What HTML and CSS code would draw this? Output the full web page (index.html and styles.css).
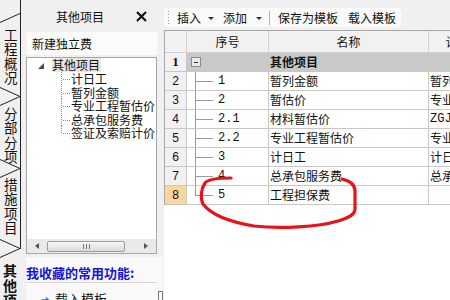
FILE: index.html
```html
<!DOCTYPE html>
<html lang="zh-CN">
<head>
  <meta charset="UTF-8" />
  <title>其他项目</title>
  <link rel="stylesheet" href="styles.css">
</head>
<body>
  <div class="app">
    <div class="tabs">
      <svg class="tab-lines" width="21" height="300" viewBox="0 0 21 300">
        <path d="M0 22.5 L20 13.5 M0 87.5 L20 96.5 L0 105.5 M0 159.5 L20 168.5 L0 177.5 M0 239.5 L20 248.5 L0 257.5" stroke="#222" fill="none" />
      </svg>
      <div class="tab t1"><span>工程概况</span></div>
      <div class="tab t2"><span>分部分项</span></div>
      <div class="tab t3"><span>措施项目</span></div>
      <div class="tab t4 active"><span>其他项目</span></div>
    </div>

    <div class="side">
      <div class="side-head">
        <span>其他项目</span>
        <svg class="close" width="11" height="11" viewBox="0 0 11 11">
          <path d="M1 1 L10 10 M10 1 L1 10" stroke="#111" stroke-width="2.2" />
        </svg>
      </div>
      <div class="new-box">新建独立费</div>

      <div class="tree">
        <div class="tree-root"><i class="tri"></i><span>其他项目</span></div>
        <ul class="tree-kids">
          <li>计日工</li>
          <li>暂列金额</li>
          <li>专业工程暂估价</li>
          <li>总承包服务费</li>
          <li>签证及索赔计价</li>
        </ul>
        <div class="hscroll">
          <i class="arr-l"></i>
          <div class="thumb"><b></b></div>
          <i class="arr-r"></i>
        </div>
      </div>

      <div class="fav">
        <div class="fav-title">我收藏的常用功能:</div>
        <div class="fav-item">
          <span class="go">➔</span><span>载入模板</span>
          <i class="vstub"></i>
        </div>
      </div>
    </div>

    <div class="main">
      <div class="toolbar">
        <i class="grip"></i>
        <span class="tb-item first">插入</span><i class="dd"></i>
        <span class="tb-item add">添加</span><i class="dd dd2"></i>
        <i class="sep"></i>
        <span class="tb-item save">保存为模板</span>
        <span class="tb-item load">载入模板</span>
      </div>

      <div class="grid">
        <div class="row head">
          <div class="c num"></div>
          <div class="c center">序号</div>
          <div class="c center">名称</div>
          <div class="c center">计算基数</div>
        </div>
        <div class="row parent">
          <div class="c num"><b>1</b></div>
          <div class="c seq0"><i class="fold"></i></div>
          <div class="c name"><b>其他项目</b></div>
          <div class="c base"></div>
        </div>
        <div class="row">
          <div class="c num">2</div>
          <div class="c seq">1</div>
          <div class="c name">暂列金额</div>
          <div class="c base">暂列金额</div>
        </div>
        <div class="row">
          <div class="c num">3</div>
          <div class="c seq">2</div>
          <div class="c name">暂估价</div>
          <div class="c base">专业工程暂估价</div>
        </div>
        <div class="row">
          <div class="c num">4</div>
          <div class="c seq">2.1</div>
          <div class="c name">材料暂估价</div>
          <div class="c base mono">ZGJCLHJ</div>
        </div>
        <div class="row">
          <div class="c num">5</div>
          <div class="c seq">2.2</div>
          <div class="c name">专业工程暂估价</div>
          <div class="c base">专业工程暂估价</div>
        </div>
        <div class="row">
          <div class="c num">6</div>
          <div class="c seq">3</div>
          <div class="c name">计日工</div>
          <div class="c base">计日工</div>
        </div>
        <div class="row">
          <div class="c num">7</div>
          <div class="c seq">4</div>
          <div class="c name">总承包服务费</div>
          <div class="c base">总承包服务费</div>
        </div>
        <div class="row">
          <div class="c num current">8</div>
          <div class="c seq last">5</div>
          <div class="c name">工程担保费</div>
          <div class="c base"></div>
        </div>
      </div>
    </div>

    <!-- hand drawn mark over the new row -->
    <svg class="mark" width="450" height="300" viewBox="0 0 450 300">
      <path d="M231 178 C218 178 208 179 205 183 C201 189 200 198 203 204 C209 212 224 221 254 226 C280 229 318 227 338 221 C348 218 355 215 355 209 L355 191 C355 185 351 181 342 179" stroke="#e8121a" stroke-width="3.2" fill="none" stroke-linecap="round" stroke-linejoin="round" />
    </svg>
  </div>
</body>
</html>
```

FILE: styles.css
```css
body {
  margin: 0;
  width: 450px;
  height: 300px;
  overflow: hidden;
  background: #f0f0f0;
  color: #111;
  font-family: "Noto Sans CJK SC", sans-serif;
  font-size: 12px;
}

.app {
  position: relative;
  display: flex;
  height: 300px;
}

/* left vertical tabs */
.tabs {
  position: relative;
  width: 21px;
  flex: none;
  display: flex;
  flex-direction: column;
  overflow: hidden;
}

.tab-lines {
  position: absolute;
  top: 0;
  left: 0;
  pointer-events: none;
}

.tab {
  flex: none;
  display: flex;
  justify-content: center;
  box-sizing: border-box;
  border-right: 1px solid #222;
  font-size: 13.5px;
  line-height: 1;
  overflow: hidden;
}

.tab span {
  writing-mode: vertical-rl;
  white-space: nowrap;
  letter-spacing: 1px;
}

.t1 { height: 97px; padding-top: 28px; }
.t2 { height: 72px; padding-top: 10px; }
.t3 { height: 80px; padding-top: 9px; }

.t4 {
  flex: 1;
  min-height: 0;
  padding-top: 15px;
  border-right-color: transparent;
  font-size: 14px;
  font-weight: bold;
}

/* side panel */
.side {
  width: 142px;
  flex: none;
  display: flex;
  flex-direction: column;
  overflow: hidden;
}

.side > * {
  flex: none;
}

.side-head {
  height: 32px;
  display: flex;
  align-items: center;
  justify-content: space-between;
  padding: 0 16px 0 35px;
}

.new-box {
  margin-left: 6px;
  width: 130px;
  height: 23px;
  line-height: 23px;
  padding-left: 5px;
  box-sizing: border-box;
  background: #fbfbfb;
}

.tree {
  margin: 2px 0 0 5px;
  width: 131px;
  height: 197px;
  box-sizing: border-box;
  border: 1px solid #a8a8a8;
  background: #fff;
  display: flex;
  flex-direction: column;
  overflow: hidden;
}

.tree-root {
  height: 14px;
  display: flex;
  align-items: center;
  padding-left: 11px;
}

.tri {
  width: 0;
  height: 0;
  border-left: 6px solid transparent;
  border-bottom: 6px solid #4a4a4a;
  margin: 1px 8px 0 0;
}

.tree-root span {
  background: #e6e6e6;
  line-height: 14px;
  padding-right: 1px;
}

.tree-kids {
  list-style: none;
  margin: 0;
  padding: 0;
}

.tree-kids li {
  height: 13.5px;
  line-height: 13.5px;
  padding-left: 44px;
  white-space: nowrap;
  background:
    repeating-linear-gradient(to bottom, #8c8c8c 0 1px, transparent 1px 2px) 34px 0 / 1px 100% no-repeat,
    repeating-linear-gradient(to right, #8c8c8c 0 1px, transparent 1px 2px) 36px 7px / 7px 1px no-repeat;
}

.tree-kids li:last-child {
  background:
    repeating-linear-gradient(to bottom, #8c8c8c 0 1px, transparent 1px 2px) 34px 0 / 1px 8px no-repeat,
    repeating-linear-gradient(to right, #8c8c8c 0 1px, transparent 1px 2px) 36px 7px / 7px 1px no-repeat;
}

.hscroll {
  margin-top: auto;
  height: 14px;
  background: #e9e9e9;
  display: flex;
  align-items: center;
}

.arr-l {
  margin-left: 8px;
  border-right: 4px solid #555;
  border-top: 3px solid transparent;
  border-bottom: 3px solid transparent;
}

.thumb {
  margin-left: 8px;
  width: 78px;
  height: 11px;
  box-sizing: border-box;
  border: 1px solid #9c9c9c;
  border-radius: 2px;
  background: linear-gradient(#f8f8f8, #dadada);
  display: flex;
  align-items: center;
  justify-content: center;
}

.thumb b {
  width: 7px;
  height: 5px;
  background: repeating-linear-gradient(to right, #777 0 1px, transparent 1px 3px);
}

.arr-r {
  margin-left: 19px;
  border-left: 4px solid #555;
  border-top: 3px solid transparent;
  border-bottom: 3px solid transparent;
}

.side > .fav {
  flex: 1;
  min-height: 0;
  margin: 3px 0 0 5px;
  padding-top: 8px;
  background: #f9f9f9;
}

.fav-title {
  margin-right: 6px;
  padding-bottom: 2px;
  border-bottom: 1px solid #d6d6d6;
  color: #1414dc;
  font-size: 13px;
  font-weight: bold;
  line-height: 15px;
}

.fav-item {
  display: flex;
  align-items: flex-start;
  padding-top: 8px;
  font-size: 13px;
  line-height: 15px;
}

.go {
  color: #3c68d8;
  font-size: 10px;
  margin: 0 6px 0 15px;
}

.vstub {
  margin-left: auto;
  width: 5px;
  height: 12px;
  border: 1px solid #777;
  box-sizing: border-box;
}

/* main area */
.main {
  flex: 1;
  overflow: hidden;
  display: flex;
  flex-direction: column;
  padding-left: 1px;
  background: linear-gradient(#fff, #fff) 1px 30px / 100% 100% no-repeat;
}

.toolbar {
  align-self: flex-start;
  margin-top: 8px;
  height: 19px;
  display: flex;
  align-items: center;
  padding: 0 5px 0 4px;
  background: #fafafa;
  border-radius: 3px;
}

.grip {
  width: 1px;
  height: 13px;
  background: repeating-linear-gradient(to bottom, #9a9a9a 0 1px, transparent 1px 3px);
}

.tb-item {
  white-space: nowrap;
}

.tb-item.first { margin-left: 8px; }
.tb-item.add { margin-left: 9px; }
.tb-item.save { margin-left: 8px; }
.tb-item.load { margin-left: 10px; }

.dd {
  margin: 1px 0 0 7px;
  border-top: 3px solid #333;
  border-left: 3px solid transparent;
  border-right: 3px solid transparent;
}

.dd2 { margin-left: 9px; }

.sep {
  margin-left: 7px;
  width: 1px;
  height: 14px;
  background: #b4b4b4;
}

.grid {
  margin-top: 3px;
  width: max-content;
  border-top: 1px solid #a8a8a8;
  border-left: 1px solid #a8a8a8;
}

.row {
  display: grid;
  grid-template-columns: 22px 82px 160px 82px;
  height: 19px;
}

.row.head {
  height: 22px;
  background: #f1f1f1;
}

.c {
  box-sizing: border-box;
  border-right: 1px solid #c8c8c8;
  border-bottom: 1px solid #c8c8c8;
  line-height: 18px;
  white-space: nowrap;
  overflow: hidden;
}

.row.head .c {
  line-height: 21px;
  border-color: #d2d2d2;
}

.center { text-align: center; }

.num {
  background: #f1f1f1;
  text-align: center;
  font-family: "Liberation Sans", sans-serif;
  font-size: 12px;
}

.num b {
  font-family: "Liberation Serif", serif;
  font-size: 13px;
}

.num.current { background: #fbd59c; }

.parent .c:not(.num) { background: #c9c9c9; }

.seq0 {
  display: flex;
  align-items: center;
  padding-left: 4px;
}

.fold {
  width: 10px;
  height: 10px;
  box-sizing: border-box;
  border: 1px solid #8c8c8c;
  background: linear-gradient(#333, #333) center / 4px 1px no-repeat, #e9e9e9;
}

.seq {
  padding-left: 31px;
  font-family: "Liberation Mono", monospace;
  font-size: 12px;
  background:
    linear-gradient(#9a9a9a, #9a9a9a) 8px 0 / 1px 100% no-repeat,
    linear-gradient(#9a9a9a, #9a9a9a) 8px 9px / 18px 1px no-repeat;
}

.seq.last {
  background:
    linear-gradient(#9a9a9a, #9a9a9a) 8px 0 / 1px 10px no-repeat,
    linear-gradient(#9a9a9a, #9a9a9a) 8px 9px / 18px 1px no-repeat;
}

.name,
.base {
  padding-left: 1px;
}

.mono {
  font-family: "Liberation Mono", monospace;
}

.mark {
  position: absolute;
  top: 0;
  left: 0;
  pointer-events: none;
}
```
